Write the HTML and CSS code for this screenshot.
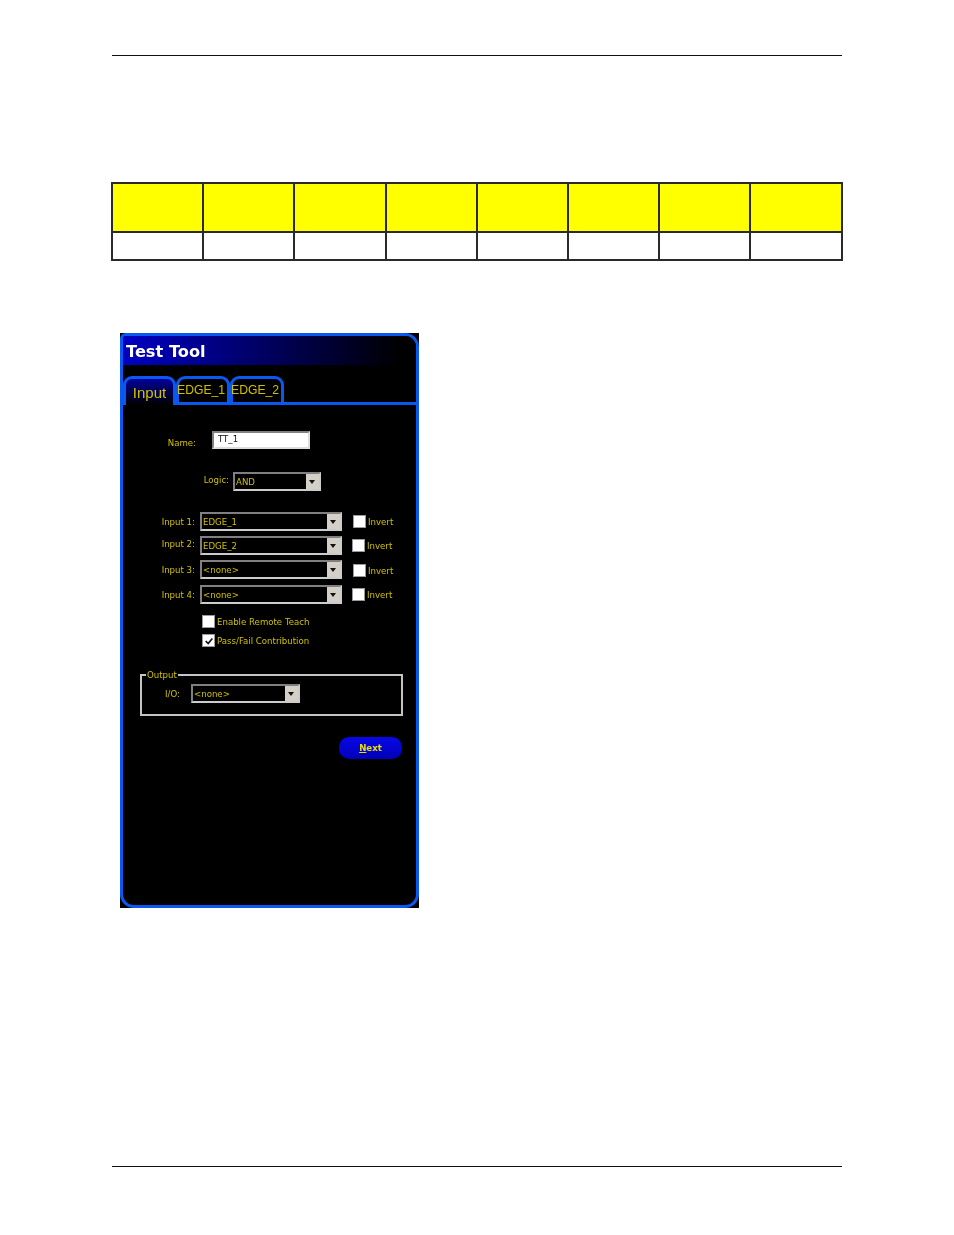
FILE: index.html
```html
<!DOCTYPE html>
<html lang="en">
<head>
    <meta charset="UTF-8">
    <meta name="viewport" content="width=device-width, initial-scale=1.0">
    <title>Test Tool</title>
    <link rel="stylesheet" href="styles.css">
</head>
<body>
    <div class="page">
        <hr class="rule">

        <table class="grid">
            <tr class="head">
                <td></td><td></td><td></td><td></td><td></td><td></td><td></td><td></td>
            </tr>
            <tr class="blank">
                <td></td><td></td><td></td><td></td><td></td><td></td><td></td><td></td>
            </tr>
        </table>

        <div class="tool">
            <div class="frame">
                <div class="title">Test Tool</div>

                <div class="tabs">
                    <div class="tab active">Input</div>
                    <div class="tab">EDGE_1</div>
                    <div class="tab">EDGE_2</div>
                </div>

                <div class="row row-name">
                    <span class="label">Name:</span>
                    <div class="textbox">TT_1</div>
                </div>

                <div class="row row-logic">
                    <span class="label">Logic:</span>
                    <div class="combo"><span class="value">AND</span><span class="arrow"></span></div>
                </div>

                <div class="row row-input first">
                    <span class="label">Input 1:</span>
                    <div class="combo"><span class="value">EDGE_1</span><span class="arrow"></span></div>
                    <span class="check"></span>
                    <span class="check-text">Invert</span>
                </div>
                <div class="row row-input second">
                    <span class="label">Input 2:</span>
                    <div class="combo"><span class="value">EDGE_2</span><span class="arrow"></span></div>
                    <span class="check"></span>
                    <span class="check-text">Invert</span>
                </div>
                <div class="row row-input third">
                    <span class="label">Input 3:</span>
                    <div class="combo"><span class="value">&lt;none&gt;</span><span class="arrow"></span></div>
                    <span class="check"></span>
                    <span class="check-text">Invert</span>
                </div>
                <div class="row row-input fourth">
                    <span class="label">Input 4:</span>
                    <div class="combo"><span class="value">&lt;none&gt;</span><span class="arrow"></span></div>
                    <span class="check"></span>
                    <span class="check-text">Invert</span>
                </div>

                <div class="row row-option remote">
                    <span class="check"></span>
                    <span class="check-text">Enable Remote Teach</span>
                </div>
                <div class="row row-option passfail">
                    <span class="check">
                        <svg viewBox="0 0 12 12" width="10" height="10"><path d="M2 6l3 3 5-6" fill="none" stroke="#111" stroke-width="2"/></svg>
                    </span>
                    <span class="check-text">Pass/Fail Contribution</span>
                </div>

                <fieldset class="output">
                    <legend>Output</legend>
                    <div class="row row-io">
                        <span class="label">I/O:</span>
                        <div class="combo"><span class="value">&lt;none&gt;</span><span class="arrow"></span></div>
                    </div>
                </fieldset>

                <div class="actions">
                    <button class="next"><u>N</u>ext</button>
                </div>
            </div>
        </div>

        <hr class="rule rule-bottom">
    </div>
</body>
</html>
```

FILE: styles.css
```css
body {
    margin: 0;
    background: #fff;
    font-family: "DejaVu Sans", sans-serif;
}

.page {
    padding: 55px 112px 0;
}

.rule {
    height: 1px;
    margin: 0;
    border: 0;
    background: #111;
}

.rule-bottom {
    margin-top: 258px;
}

/* table */
.grid {
    width: 731.5px;
    margin: 126px 0 0 -1px;
    border-collapse: collapse;
    table-layout: fixed;
}

.grid td {
    padding: 0;
    border: 2px solid #2a2a2a;
}

.grid .head td {
    height: 47px;
    background: #ff0;
}

.grid .blank td {
    height: 26px;
}

/* tool window */
.tool {
    width: 299px;
    height: 575px;
    margin: 72px 0 0 8px;
    background: #000;
    filter: blur(0.5px);
}

.frame {
    box-sizing: border-box;
    height: 100%;
    border: 3px solid #0a58f0;
    border-radius: 14px;
    border-top-left-radius: 6px;
    overflow: hidden;
    color: #d0c000;
    font-size: 8.6px;
}

.title {
    height: 29px;
    padding-left: 3px;
    background: linear-gradient(90deg, #0000c4, #000 95%);
    color: #fff;
    font-size: 16.2px;
    font-weight: bold;
    line-height: 32px;
}

.tabs {
    display: flex;
    height: 40px;
    box-sizing: border-box;
    padding-top: 11px;
    border-bottom: 3px solid #0a58f0;
}

.tab {
    box-sizing: border-box;
    width: 54px;
    height: 29px;
    border: 3px solid #0a58f0;
    border-bottom: 0;
    border-radius: 9px 9px 0 0;
    font-family: "Liberation Sans", sans-serif;
    font-size: 12.2px;
    line-height: 22px;
    text-indent: -2px;
    white-space: nowrap;
}

.tab.active {
    width: 53px;
    height: 29px;
    background: linear-gradient(#00009c, #000);
    font-size: 15px;
    line-height: 27px;
    text-align: center;
    text-indent: 0;
}

/* form rows */
.row {
    display: flex;
    align-items: center;
    height: 19px;
}

.label {
    text-align: right;
}

.row-name {
    height: 18px;
    margin-top: 26px;
}

.row-name .label {
    width: 73px;
    margin-right: 16px;
    padding-top: 5px;
}

.textbox {
    box-sizing: border-box;
    width: 98px;
    height: 18px;
    padding-left: 4px;
    border: 2px solid;
    border-color: #808080 #ddd #ddd #808080;
    background: #fff;
    color: #111;
    line-height: 13px;
}

.row-logic {
    margin-top: 23px;
}

.row-logic .label {
    width: 106px;
    margin-right: 4px;
    padding-bottom: 4px;
}

.row-logic .combo {
    width: 88px;
}

.combo {
    display: flex;
    justify-content: space-between;
    box-sizing: border-box;
    height: 19px;
    border: 2px solid;
    border-color: #808080 #ccc #ccc #808080;
    background: #000;
}

.value {
    padding-left: 1px;
    line-height: 16px;
}

.arrow {
    position: relative;
    width: 13px;
    background: #d4d0c8;
}

.arrow::after {
    content: "";
    position: absolute;
    top: 6px;
    left: 3px;
    border: 3px solid transparent;
    border-top: 4px solid #111;
    border-bottom: 0;
}

.row-input .label {
    width: 72px;
    margin-right: 5px;
}

.row-input .combo {
    width: 142px;
}

.row-input .check {
    margin-left: 11px;
}

.row-input.first {
    margin-top: 21px;
}

.row-input.second {
    margin-top: 5px;
}

.row-input.second .label {
    padding-bottom: 3px;
}

.row-input.second .check {
    margin-left: 10px;
}

.row-input.third {
    margin-top: 5px;
}

.row-input.third .check {
    margin-top: 2px;
}

.row-input.third .check-text {
    padding-top: 2px;
}

.row-input.fourth {
    margin-top: 6px;
}

.row-input.fourth .check {
    margin-left: 10px;
}

.check {
    display: flex;
    align-items: center;
    justify-content: center;
    box-sizing: border-box;
    width: 13px;
    height: 13px;
    margin-right: 2px;
    border: 1px solid #999;
    background: #fff;
}

.row-option {
    height: 13px;
    padding-left: 79px;
}

.row-option.remote {
    margin-top: 11px;
}

.row-option.passfail {
    margin-top: 6px;
}

/* output group */
.output {
    box-sizing: border-box;
    width: 263px;
    height: 48px;
    min-width: 0;
    margin: 21px 0 0 17px;
    padding: 0;
    border: 2px solid #c4c4c4;
}

.output legend {
    margin-left: 4px;
    padding: 2px 1px 0;
    line-height: 11px;
}

.row-io {
    margin-top: 3px;
}

.row-io .label {
    width: 38px;
    margin-right: 11px;
}

.row-io .combo {
    width: 109px;
}

.actions {
    display: flex;
    justify-content: flex-end;
    margin: 21px 14px 0 0;
}

.next {
    width: 63px;
    height: 22px;
    padding: 0;
    border: 0;
    border-radius: 10px;
    background: linear-gradient(#0808e8, #0000b8);
    color: #e8e000;
    font-family: "DejaVu Sans", sans-serif;
    font-size: 8.6px;
    font-weight: bold;
}
```
